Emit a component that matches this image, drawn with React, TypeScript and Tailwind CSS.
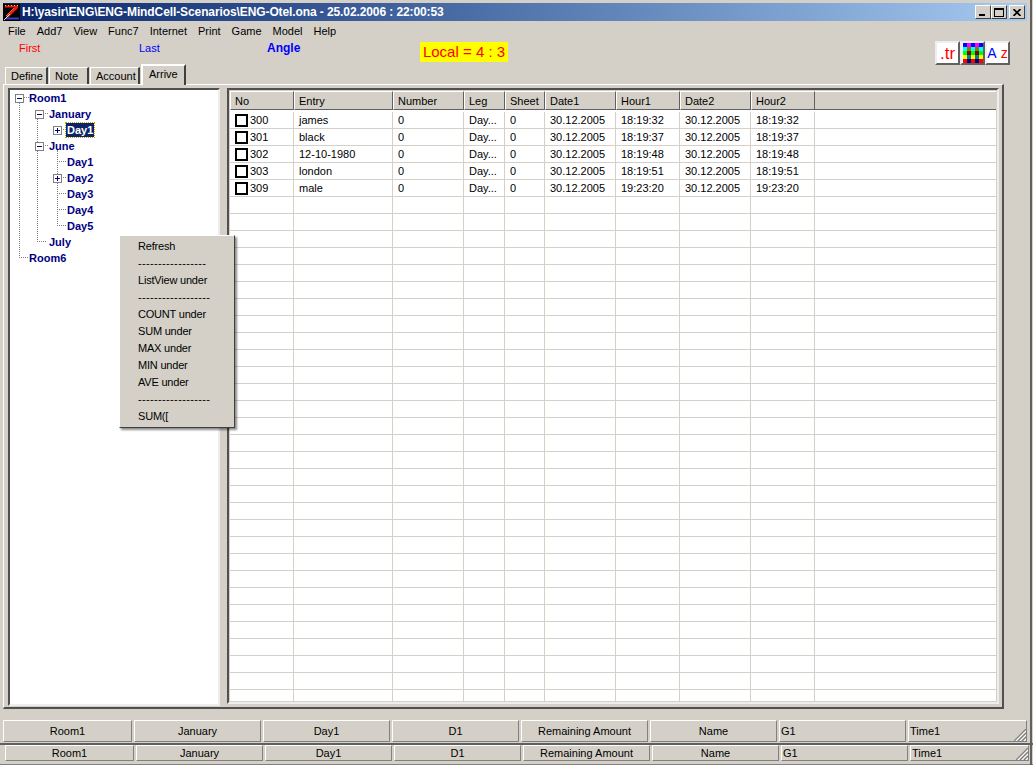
import { ReactNode } from "react"

const FONT = "font-['Liberation_Sans',Arial,sans-serif]"

const menus = ["File", "Add7", "View", "Func7", "Internet", "Print", "Game", "Model", "Help"]

const columns = [
  { name: "No", w: "w-[64px]" },
  { name: "Entry", w: "w-[99px]" },
  { name: "Number", w: "w-[71px]" },
  { name: "Leg", w: "w-[41px]" },
  { name: "Sheet", w: "w-[40px]" },
  { name: "Date1", w: "w-[71px]" },
  { name: "Hour1", w: "w-[64px]" },
  { name: "Date2", w: "w-[71px]" },
  { name: "Hour2", w: "w-[64px]" },
]

const rows = [
  ["300", "james", "0", "Day...", "0", "30.12.2005", "18:19:32", "30.12.2005", "18:19:32"],
  ["301", "black", "0", "Day...", "0", "30.12.2005", "18:19:37", "30.12.2005", "18:19:37"],
  ["302", "12-10-1980", "0", "Day...", "0", "30.12.2005", "18:19:48", "30.12.2005", "18:19:48"],
  ["303", "london", "0", "Day...", "0", "30.12.2005", "18:19:51", "30.12.2005", "18:19:51"],
  ["309", "male", "0", "Day...", "0", "30.12.2005", "19:23:20", "30.12.2005", "19:23:20"],
]

const emptyRows = Array.from({ length: 30 }, () => ["", "", "", "", "", "", "", "", ""])

const statusLabels = ["Room1", "January", "Day1", "D1", "Remaining Amount", "Name", "G1", "Time1"]
const statusWidths = ["w-[129px]", "w-[127px]", "w-[127px]", "w-[127px]", "w-[127px]", "w-[127px]", "w-[127px]", "w-[119px]"]

const menuItems = [
  "Refresh",
  "-----------------",
  "ListView under",
  "------------------",
  "COUNT under",
  "SUM under",
  "MAX under",
  "MIN under",
  "AVE under",
  "------------------",
  "SUM([",
]

function Logo() {
  return (
    <svg width="17" height="17" viewBox="0 0 17 17" className="shrink-0">
      <rect width="17" height="17" fill="#000" />
      <path d="M2 2.5H15" stroke="#f01818" strokeWidth="2" />
      <path d="M2 1.5H15" stroke="#f0d020" strokeWidth="1" strokeDasharray="1 2" />
      <path d="M14 3L4 13" stroke="#f01818" strokeWidth="2.6" />
      <path d="M11 4L3 12" stroke="#f09018" strokeWidth="0.8" />
      <path d="M3 14.5H16" stroke="#3040d0" strokeWidth="2" />
      <path d="M1 16L7 10" stroke="#e8e8e8" strokeWidth="1" />
    </svg>
  )
}

function WinButton({ children }: { children: ReactNode }) {
  return (
    <div className="w-[16px] h-[14px] bg-[#d4d0c8] border border-t-white border-l-white border-r-[#404040] border-b-[#404040] flex items-center justify-center">
      {children}
    </div>
  )
}

function TitleBar() {
  return (
    <div className="h-[18px] ml-[3px] mr-[6px] mt-[3px] flex items-center pr-[2px] bg-gradient-to-r from-[#0a246a] to-[#a6caf0]">
      <Logo />
      <span className="ml-[2px] text-white font-bold text-[12px] leading-none whitespace-nowrap tracking-[-0.1px]">
        H:\yasir\ENG\ENG-MindCell-Scenarios\ENG-Otel.ona - 25.02.2006 : 22:00:53
      </span>
      <div className="ml-auto flex items-center">
        <WinButton><div className="w-[6px] h-[2px] bg-black mt-[6px] mr-[2px]" /></WinButton>
        <WinButton><div className="w-[10px] h-[9px] border border-black border-t-2" /></WinButton>
        <div className="w-[2px]" />
        <WinButton>
          <svg width="8" height="7" viewBox="0 0 8 7"><path d="M0.5 0L7.5 7M7.5 0L0.5 7" stroke="#000" strokeWidth="1.6" /></svg>
        </WinButton>
      </div>
    </div>
  )
}

function ToolButton({ children }: { children: ReactNode }) {
  return (
    <div className="w-[25px] h-[24px] bg-white border-2 border-t-[#eeeeee] border-l-[#eeeeee] border-r-[#606060] border-b-[#606060] flex items-center justify-center overflow-hidden">
      {children}
    </div>
  )
}

function Palette() {
  const colours = [
    "#0000ff", "#ff00ff", "#0000ff", "#ff00ff", "#0000ff",
    "#00ffff", "#808000", "#00ffff", "#808000", "#00ffff",
    "#00ff00", "#800000", "#00ff00", "#800000", "#00ff00",
    "#ffff00", "#008080", "#ffff00", "#008080", "#ffff00",
    "#ff0000", "#000080", "#ff0000", "#000080", "#ff0000",
  ]
  return (
    <div className="grid grid-cols-5 w-[20px] h-[20px]">
      {colours.map((c, i) => (
        <svg key={i} width="4" height="4" className="block"><rect width="4" height="4" fill={c} /></svg>
      ))}
    </div>
  )
}

function Tab({ label, w, active }: { label: string; w: string; active?: boolean }) {
  if (active) {
    return (
      <div className={`${w} h-[21px] -mb-[1px] pl-[6px] leading-[16px] bg-[#d4d0c8] border-t-2 border-l-2 border-r-2 border-t-white border-l-white border-r-[#404040] relative z-10`}>
        {label}
      </div>
    )
  }
  return (
    <div className={`${w} h-[17px] pl-[5px] pt-[1px] leading-[15px] mr-[1px] bg-[#d4d0c8] border-t border-l border-r-2 border-t-white border-l-white border-r-[#404040]`}>
      {label}
    </div>
  )
}

function TreeRow({ label, indent, box, selected }: { label: string; indent: string; box?: "+" | "-"; selected?: boolean }) {
  return (
    <div className={`h-[16px] flex items-center ${indent}`}>
      <div className="w-[18px] h-full flex items-center relative">
        {box && (
          <div className="ml-[5px] w-[9px] h-[9px] bg-white border border-[#808080] flex items-center justify-center relative z-10">
            <div className="w-[5px] h-[1px] bg-[#000080]" />
            {box === "+" && <div className="absolute w-[1px] h-[5px] bg-[#000080]" />}
          </div>
        )}
      </div>
      <span
        className={
          selected
            ? "px-[1px] h-[14px] bg-[#0a246a] text-white font-bold outline-1 outline-dotted outline-[#c8a000] leading-[14px] relative z-10"
            : "px-[1px] text-[#000080] font-bold relative z-10"
        }
      >
        {label}
      </span>
    </div>
  )
}

function TreeLine({ className }: { className: string }) {
  return <div className={`absolute border-dotted border-[#808080] ${className}`} />
}

function Tree() {
  return (
    <div className="w-[212px] h-[618px] bg-white border-2 border-t-[#505050] border-l-[#505050] border-r-[#eeeeee] border-b-[#eeeeee] relative">
      {/* connector lines */}
      <TreeLine className="left-[9px] top-[12px] h-[156px] w-[9px] border-l border-b" />
      <TreeLine className="left-[13px] top-[7px] h-0 w-[6px] border-b" />
      <TreeLine className="left-[27px] top-[28px] h-[124px] w-[9px] border-l border-b" />
      <TreeLine className="left-[31px] top-[23px] h-0 w-[7px] border-b" />
      <TreeLine className="left-[31px] top-[55px] h-0 w-[7px] border-b" />
      <TreeLine className="left-[50px] top-[39px] h-0 w-[6px] border-b" />
      <TreeLine className="left-[47px] top-[60px] h-[76px] w-[9px] border-l border-b" />
      <TreeLine className="left-[47px] top-[71px] h-0 w-[9px] border-b" />
      <TreeLine className="left-[47px] top-[87px] h-0 w-[9px] border-b" />
      <TreeLine className="left-[47px] top-[103px] h-0 w-[9px] border-b" />
      <TreeLine className="left-[47px] top-[119px] h-0 w-[9px] border-b" />
      <TreeRow label="Room1" indent="" box="-" />
      <TreeRow label="January" indent="pl-[20px] -ml-[0px]" box="-" />
      <TreeRow label="Day1" indent="pl-[38px]" box="+" selected />
      <TreeRow label="June" indent="pl-[20px]" box="-" />
      <TreeRow label="Day1" indent="pl-[38px]" />
      <TreeRow label="Day2" indent="pl-[38px]" box="+" />
      <TreeRow label="Day3" indent="pl-[38px]" />
      <TreeRow label="Day4" indent="pl-[38px]" />
      <TreeRow label="Day5" indent="pl-[38px]" />
      <TreeRow label="July" indent="pl-[20px]" />
      <TreeRow label="Room6" indent="" />
    </div>
  )
}

function ListTable() {
  return (
    <div className="w-[772px] h-[616px] border-2 border-t-[#505050] border-l-[#505050] border-r-[#eeeeee] border-b-[#eeeeee] bg-[#d4d0c8] p-[1px]">
      <div className="h-full bg-white overflow-hidden">
        <div className="h-[19px] flex bg-[#d4d0c8]">
          {columns.map((c) => (
            <div key={c.name} className={`${c.w} h-full pl-[4px] leading-[18px] border-t border-l border-r border-b border-t-white border-l-white border-r-[#606060] border-b-[#606060]`}>
              {c.name}
            </div>
          ))}
          <div className="flex-1 border-t border-b border-t-white border-b-[#606060]" />
        </div>
        <div className="mt-[2px]">
          {[...rows, ...emptyRows].map((r, i) => (
            <div key={i} className="h-[17px] flex border-b border-[#d4d0c8]">
              {r.map((v, j) => (
                <div key={j} className={`${columns[j].w} h-full border-r border-[#d4d0c8] pl-[5px] leading-[17px] flex whitespace-nowrap overflow-hidden`}>
                  {j === 0 && v && (
                    <div className="w-[13px] h-[13px] border-2 border-black mt-[2px] mr-[2px] shrink-0" />
                  )}
                  {v}
                </div>
              ))}
              <div className="flex-1" />
            </div>
          ))}
        </div>
      </div>
    </div>
  )
}

function Grip() {
  return (
    <svg width="12" height="12" viewBox="0 0 12 12" className="absolute right-0 bottom-0">
      <path d="M0 12L12 0M4 12L12 4M8 12L12 8" stroke="#808080" strokeWidth="1.2" />
      <path d="M2 12L12 2M6 12L12 6M10 12L12 10" stroke="#ffffff" strokeWidth="1" />
    </svg>
  )
}

function StatusRow({ className }: { className: string }) {
  return (
    <div className={`flex gap-[2px] ${className}`}>
      {statusLabels.map((s, i) => (
        <div
          key={i}
          className={`${statusWidths[i]} h-full border-t border-l border-r border-b border-t-white border-l-white border-r-[#808080] border-b-[#808080] relative flex items-center ${i < 6 ? "justify-center" : "pl-[1px]"}`}
        >
          {s}
          {i === 7 && <Grip />}
        </div>
      ))}
    </div>
  )
}

function ContextMenu() {
  return (
    <div className="absolute left-[119px] top-[235px] w-[116px] h-[193px] bg-[#d4d0c8] border border-t-white border-l-white border-r-[#404040] border-b-[#404040] shadow-[2px_2px_2px_rgba(0,0,0,0.45)] pt-[2px] z-20">
      {menuItems.map((m, i) => (
        <div
          key={i}
          className={`h-[17px] pl-[18px] leading-[17px] whitespace-nowrap ${m.startsWith("-") ? "tracking-[0.35px]" : "tracking-[-0.2px]"}`}
        >
          {m}
        </div>
      ))}
    </div>
  )
}

export default function App() {
  return (
    <div className={`w-[1033px] h-[765px] bg-[#d4d0c8] text-[11px] text-black relative overflow-hidden flex flex-col ${FONT}`}>
      <TitleBar />
      <div className="h-[18px] mt-[1px] flex items-center pl-[8px] gap-[11px]">
        {menus.map((m) => (
          <span key={m}>{m}</span>
        ))}
      </div>
      <div className="h-[25px] flex items-start relative">
        <span className="ml-[19px] w-[120px] text-[#ff0000]">First</span>
        <span className="w-[128px] text-[#0000ff]">Last</span>
        <span className="-mt-[1px] w-[153px] text-[#0000ff] font-bold text-[12px]">Angle</span>
        <div className="mt-[2px] w-[88px] h-[20px] bg-[#ffff00] text-[#ff0000] text-[15px] leading-[20px] text-center whitespace-nowrap">Local = 4 : 3</div>
        <div className="ml-auto mr-[23px] mt-[1px] flex">
          <ToolButton><span className="text-[#ff0000] text-[17px] leading-none">.tr</span></ToolButton>
          <ToolButton><Palette /></ToolButton>
          <ToolButton>
            <span className="text-[#0000ff] text-[14px] leading-none">A</span>
            <span className="text-[#ff0000] text-[14px] leading-none ml-[4px]">z</span>
          </ToolButton>
        </div>
      </div>
      <div className="h-[19px] flex items-end pl-[5px]">
        <Tab label="Define" w="w-[43px]" />
        <Tab label="Note" w="w-[40px]" />
        <Tab label="Account" w="w-[50px]" />
        <Tab label="Arrive" w="w-[45px]" active />
      </div>
      <div className="ml-[3px] w-[1001px] h-[625px] border-t border-l border-r-2 border-b-2 border-t-white border-l-white border-r-[#505050] border-b-[#505050] pl-[4px] pt-[3px] flex gap-[7px]">
        <Tree />
        <ListTable />
      </div>
      <StatusRow className="h-[22px] mt-[11px] ml-[3px]" />
      <div className="h-[2px] mt-[1px] bg-[#606060]" />
      <StatusRow className="h-[16px] ml-[5px]" />
      <div className="h-[1px] mt-auto bg-[#808080]" />
      <ContextMenu />
      {/* window edge */}
      <div className="absolute left-[1030px] top-0 w-[2px] h-full bg-[#606060]" />
    </div>
  )
}
